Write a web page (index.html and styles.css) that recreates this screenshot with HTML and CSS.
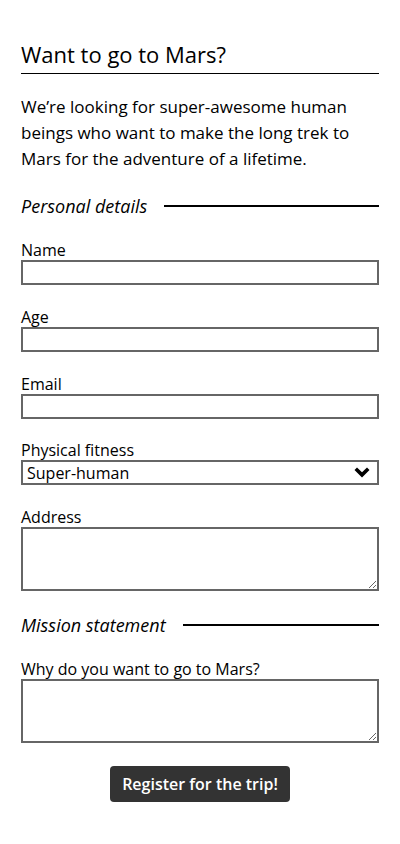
FILE: index.html
```html
<!DOCTYPE html>
<html lang="en">
<head>
<meta charset="utf-8">
<title>Want to go to Mars?</title>
<link rel="stylesheet" href="styles.css">
</head>
<body>
<main class="page">
  <h1 class="title">Want to go to Mars?</h1>
  <p class="intro">We’re looking for super-awesome human beings who want to make the long trek to Mars for the adventure of a lifetime.</p>
  <form class="form">
    <section class="group">
      <div class="legend"><span>Personal details</span></div>
      <div class="field">
        <label class="label" for="name">Name</label>
        <input class="input" id="name" type="text">
      </div>
      <div class="field">
        <label class="label" for="age">Age</label>
        <input class="input" id="age" type="text">
      </div>
      <div class="field">
        <label class="label" for="email">Email</label>
        <input class="input" id="email" type="text">
      </div>
      <div class="field">
        <label class="label" for="fitness">Physical fitness</label>
        <div class="select">
          <span class="select-value">Super-human</span>
          <svg class="chev" width="16" height="11" viewBox="0 0 16 11"><path d="M0.5 3 L3 0.5 L8 5.3 L13 0.5 L15.5 3 L8 10.5 Z" fill="#000"/></svg>
        </div>
      </div>
      <div class="field">
        <label class="label" for="address">Address</label>
        <textarea class="input area" id="address"></textarea>
      </div>
    </section>
    <section class="group">
      <div class="legend"><span>Mission statement</span></div>
      <div class="field">
        <label class="label" for="why">Why do you want to go to Mars?</label>
        <textarea class="input area" id="why"></textarea>
      </div>
    </section>
    <div class="actions">
      <button class="btn" type="button">Register for the trip!</button>
    </div>
  </form>
</main>
</body>
</html>
```
FILE: styles.css
```css
html, body {
  margin: 0;
  padding: 0;
  background: #fff;
}
body {
  font-family: "Open Sans", "DejaVu Sans", sans-serif;
  color: #000;
}
.page {
  padding: 40px 21px 40px 21px;
}
.title {
  margin: 0;
  font-size: 22px;
  font-weight: 400;
  line-height: 29px;
  padding-bottom: 4px;
  border-bottom: 1px solid #000;
}
.intro {
  margin: 20px 0 0;
  font-size: 17px;
  line-height: 26px;
}
.form {
  margin: 0;
}
.group {
  margin-top: 22px;
}
.legend {
  display: flex;
  align-items: center;
  gap: 17px;
  font-size: 18px;
  font-style: italic;
  line-height: 24px;
}
.legend::after {
  content: "";
  flex: 1;
  height: 2px;
  background: #000;
}
.field {
  margin-top: 21.8px;
  display: flex;
  flex-direction: column;
}
.legend + .field {
  margin-top: 22px;
}
.label {
  font-size: 16px;
  line-height: 20px;
}
.input {
  box-sizing: border-box;
  width: 100%;
  height: 25px;
  margin: 0;
  border: 2px solid #666;
  border-radius: 0;
  background: #fff;
  font: inherit;
  padding: 0 4px;
}
.area {
  height: 64px;
  resize: vertical;
}
.select {
  box-sizing: border-box;
  height: 25px;
  border: 2px solid #666;
  display: flex;
  align-items: center;
  justify-content: space-between;
  padding: 0 7px 0 4px;
  font-size: 16px;
}
.chev {
  display: block;
}
.actions {
  display: flex;
  justify-content: center;
  margin-top: 23px;
}
.btn {
  background: #333;
  color: #fff;
  border: none;
  border-radius: 4px;
  font-family: "Open Sans", sans-serif;
  font-weight: 600;
  font-size: 16px;
  height: 36px;
  padding: 0 12px;
}
```
